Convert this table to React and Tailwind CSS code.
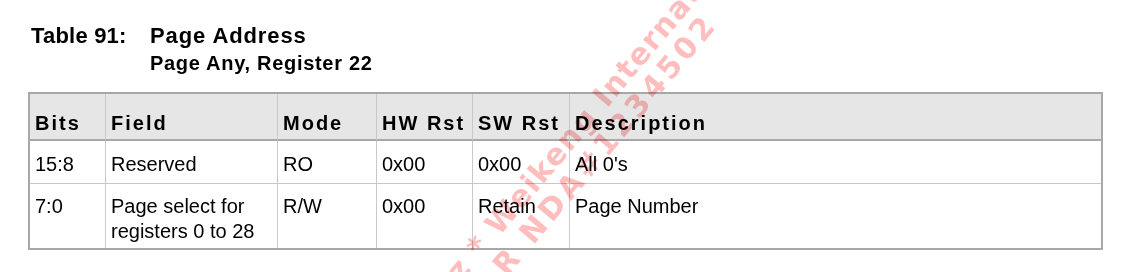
const columns = [
  { key: "bits", label: "Bits", width: "w-[76px]" },
  { key: "field", label: "Field", width: "w-[172px]" },
  { key: "mode", label: "Mode", width: "w-[99px]" },
  { key: "hw", label: "HW Rst", width: "w-[96px]" },
  { key: "sw", label: "SW Rst", width: "w-[97px]" },
  { key: "desc", label: "Description", width: "w-[531px]" },
];

const rows = [
  {
    bits: "15:8",
    field: ["Reserved"],
    mode: "RO",
    hw: "0x00",
    sw: "0x00",
    desc: "All 0's",
  },
  {
    bits: "7:0",
    field: ["Page select for", "registers 0 to 28"],
    mode: "R/W",
    hw: "0x00",
    sw: "Retain",
    desc: "Page Number",
  },
];

const Watermark = () => (
  <div className="pointer-events-none absolute inset-0 mix-blend-multiply">
    <div className="absolute left-[439px] top-[278px] origin-[0_50%] rotate-[-50deg] whitespace-nowrap font-['DejaVu_Sans',sans-serif] text-[30px] font-bold leading-[30px] tracking-[1.5px] text-[#ffbebe]">
      ez * Weikeng International
    </div>
    <div className="absolute left-[499px] top-[256px] origin-[0_50%] rotate-[-50deg] whitespace-nowrap font-['DejaVu_Sans',sans-serif] text-[30px] font-bold leading-[30px] tracking-[4px] text-[#ffbebe]">
      R NDA#1234502
    </div>
  </div>
);

export default function App() {
  return (
    <div className="relative h-[272px] w-[1135px] overflow-hidden bg-white pt-[23px] font-['Liberation_Sans',Arial,sans-serif] text-black">
      {/* Caption */}
      <div className="pl-[31px]">
        <div className="flex text-[22px] font-bold leading-[26px]">
          <span className="w-[119px] tracking-[0.2px]">Table 91:</span>
          <span className="tracking-[0.9px]">Page Address</span>
        </div>
        <div className="mt-[2px] pl-[119px] text-[20px] font-bold leading-[24px] tracking-[0.7px]">
          Page Any, Register 22
        </div>
      </div>

      {/* Register table */}
      <div className="ml-[28px] mt-[17px] w-[1075px] border-2 border-[#a8a8a8]">
        <div className="flex bg-[#e6e6e6]">
          {columns.map((col, i) => (
            <div
              key={col.key}
              className={`${col.width} h-[47px] border-b-2 border-b-[#a8a8a8] pl-[5px] pt-[17px] text-[20px] font-bold leading-[24px] tracking-[2px] ${
                i < columns.length - 1 ? "border-r border-r-[#c8c8c8]" : ""
              }`}
            >
              {col.label}
            </div>
          ))}
        </div>

        {rows.map((row, r) => (
          <div key={r} className="flex">
            {columns.map((col, i) => (
              <div
                key={col.key}
                className={`${col.width} pl-[5px] text-[20px] leading-[25px] ${
                  r === 0 ? "h-[43px] border-b border-b-[#c8c8c8] pt-[11px]" : "h-[64px] pt-[10px]"
                } ${i < columns.length - 1 ? "border-r border-r-[#c8c8c8]" : ""}`}
              >
                {col.key === "field"
                  ? row.field.map((line) => <div key={line}>{line}</div>)
                  : row[col.key]}
              </div>
            ))}
          </div>
        ))}
      </div>

      <Watermark />
    </div>
  );
}
